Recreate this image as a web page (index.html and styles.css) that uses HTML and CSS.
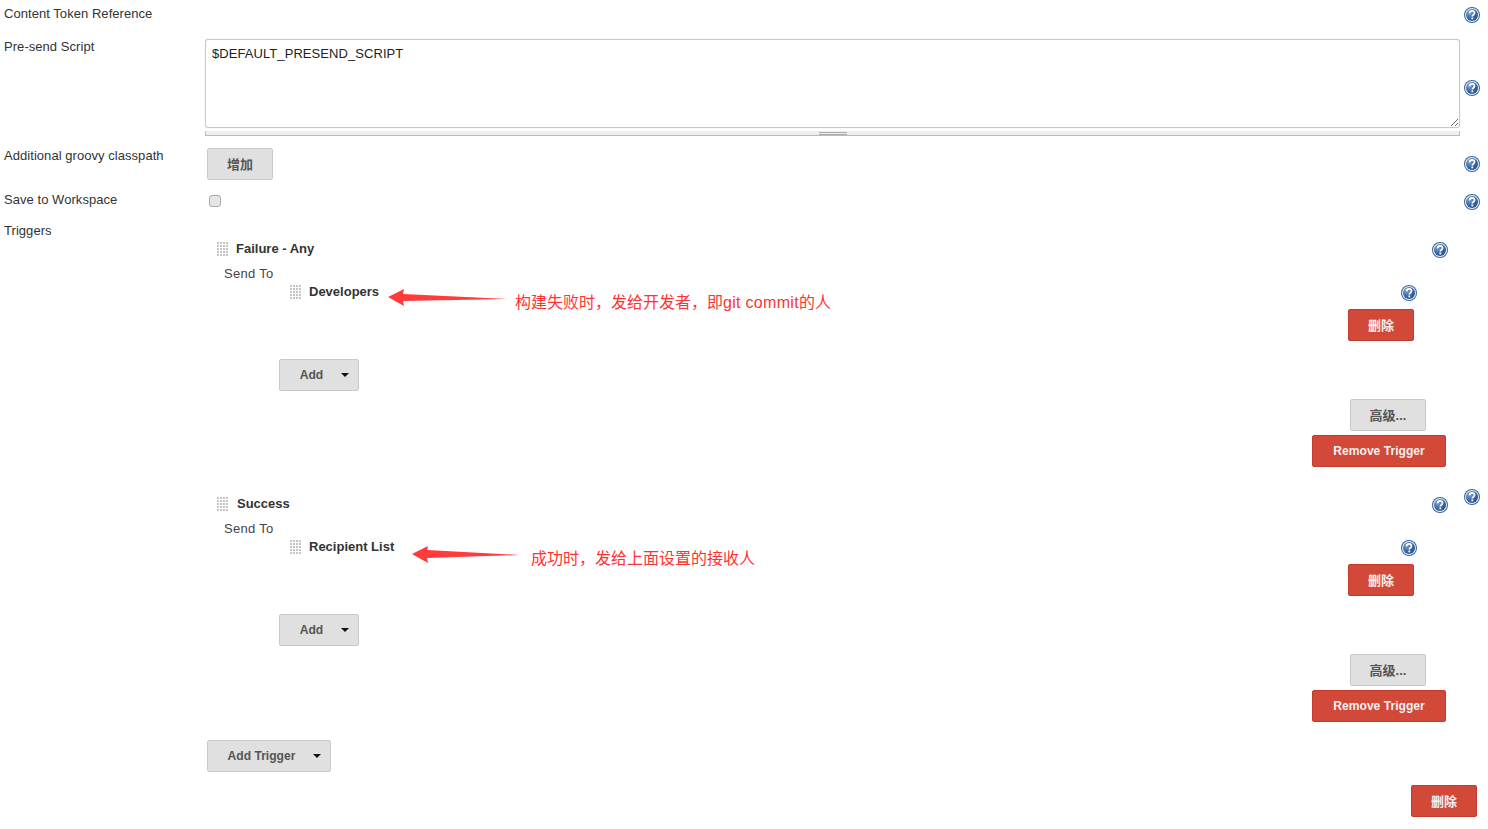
FILE: index.html
```html
<!DOCTYPE html>
<html lang="zh">
<head>
<meta charset="utf-8">
<title>Editable Email Notification</title>
<link rel="stylesheet" href="styles.css">
</head>
<body>
<svg class="defs" width="0" height="0" aria-hidden="true">
  <defs>
    <radialGradient id="helpFill" cx="30%" cy="30%" r="85%">
      <stop offset="0" stop-color="#86a6cd"/>
      <stop offset="0.5" stop-color="#3f6ca8"/>
      <stop offset="1" stop-color="#1f4c8a"/>
    </radialGradient>
    <symbol id="help" viewBox="0 0 16 16">
      <circle cx="8" cy="8" r="8" fill="#36659f"/>
      <circle cx="8" cy="8" r="7" fill="#eef3f8"/>
      <circle cx="8" cy="8" r="6" fill="url(#helpFill)"/>
      <path d="M5.6 6.2C5.7 4.7 6.7 3.9 8.1 3.9c1.5 0 2.4.9 2.4 2.1 0 1-.6 1.5-1.3 2-.6.4-.8.7-.8 1.5" fill="none" stroke="#fff" stroke-width="1.7"/>
      <rect x="7.4" y="10.5" width="1.8" height="1.8" fill="#fff"/>
    </symbol>
  </defs>
</svg>
<div class="page">
  <div class="row row-token">
    <div class="label">Content Token Reference</div>
    <div></div>
    <svg class="help help-top"><use href="#help"/></svg>
  </div>

  <div class="row row-script">
    <div class="label">Pre-send Script</div>
    <div class="field">
      <textarea class="script" spellcheck="false">$DEFAULT_PRESEND_SCRIPT</textarea>
      <div class="grippie"><span class="grip-lines"></span></div>
    </div>
    <svg class="help"><use href="#help"/></svg>
  </div>

  <div class="row row-classpath">
    <div class="label">Additional groovy classpath</div>
    <div class="field"><button class="btn btn-cjk btn-add-path">增加</button></div>
    <svg class="help"><use href="#help"/></svg>
  </div>

  <div class="row row-save">
    <div class="label">Save to Workspace</div>
    <div class="field"><input class="check" type="checkbox"></div>
    <svg class="help"><use href="#help"/></svg>
  </div>

  <div class="row row-triggers">
    <div class="label">Triggers</div>
    <div class="field triggers">
      <section class="trigger">
        <div class="head">
          <span class="handle"></span>
          <span class="title">Failure - Any</span>
          <svg class="help"><use href="#help"/></svg>
        </div>
        <div class="send-to">Send To</div>
        <div class="sub">
          <div class="sub-head">
            <span class="handle"></span>
            <span class="title">Developers</span>
            <svg class="help"><use href="#help"/></svg>
          </div>
          <button class="btn btn-cjk btn-red btn-del">删除</button>
        </div>
        <button class="btn btn-menu btn-add">Add</button>
        <button class="btn btn-cjk btn-adv">高级...</button>
        <button class="btn btn-red btn-remove">Remove Trigger</button>
      </section>

      <section class="trigger">
        <div class="head">
          <span class="handle"></span>
          <span class="title title-success">Success</span>
          <svg class="help"><use href="#help"/></svg>
        </div>
        <div class="send-to">Send To</div>
        <div class="sub">
          <div class="sub-head">
            <span class="handle"></span>
            <span class="title">Recipient List</span>
            <svg class="help"><use href="#help"/></svg>
          </div>
          <button class="btn btn-cjk btn-red btn-del">删除</button>
        </div>
        <button class="btn btn-menu btn-add">Add</button>
        <button class="btn btn-cjk btn-adv">高级...</button>
        <button class="btn btn-red btn-remove">Remove Trigger</button>
      </section>

      <button class="btn btn-menu btn-add-trigger">Add Trigger</button>
    </div>
    <svg class="help"><use href="#help"/></svg>
  </div>

  <div class="footer"><button class="btn btn-cjk btn-red">删除</button></div>

  <svg class="arrow arrow-one" viewBox="0 0 120 18"><polygon points="0,8 16,0 15,5 120,10 15,12 16,17"/></svg>
  <div class="note note-one">构建失败时，发给开发者，即<span class="latin">git commit</span>的人</div>
  <svg class="arrow arrow-two" viewBox="0 0 108 18"><polygon points="0,8 16,0 15,4 108,9 15,12 16,17"/></svg>
  <div class="note note-two">成功时，发给上面设置的接收人</div>
</div>
</body>
</html>
```
FILE: styles.css
```css
* { box-sizing: border-box; }
html, body { margin: 0; padding: 0; background: #fff; }
body {
  font-family: "Liberation Sans", "Noto Sans CJK SC", sans-serif;
  font-size: 13px;
  line-height: 17px;
  color: #333;
  overflow: hidden;
}
.defs { position: absolute; }
.page { position: relative; width: 1488px; height: 829px; padding: 0 8px 0 4px; }

.row { display: grid; grid-template-columns: 201px 1255px 20px; }
.row > .help { justify-self: end; align-self: center; }
.label { letter-spacing: 0.05px; }

.help { display: block; width: 16px; height: 16px; flex: none; }
.row > .help-top { align-self: start; margin-top: 7px; }

.row-token { height: 38px; }
.row-token .label { margin-top: 5px; }
.row-script { height: 100px; }
.row-classpath { height: 34px; margin-top: 9px; }
.row-save { height: 22px; margin-top: 10px; }
.row-triggers { margin-top: 9px; padding-bottom: 2px; }

.script {
  display: block;
  width: 1255px;
  height: 89px;
  margin: 1px 0 0;
  padding: 5px 6px;
  border: 1px solid #c8c8c8;
  border-radius: 3px;
  box-shadow: 0 0 1px #ccc;
  font: 13px/17px "Liberation Sans", sans-serif;
  letter-spacing: 0.07px;
  color: #222;
  outline: none;
}
.grippie {
  display: flex;
  justify-content: center;
  align-items: center;
  height: 5px;
  margin-top: 3px;
  background: #eee;
  border: solid #bbb;
  border-width: 0 1px 1px;
}
.grip-lines {
  display: block;
  width: 28px;
  height: 3px;
  border-top: 1px solid #aaa;
  border-bottom: 1px solid #aaa;
}

.btn {
  display: block;
  height: 32px;
  padding: 0;
  border: 1px solid #c9c9c9;
  border-radius: 2px;
  background: #e0e0e0;
  color: #555;
  font: bold 12.1px/17px "Liberation Sans", "Noto Sans CJK SC", sans-serif;
  text-align: center;
}
.btn-cjk { font-size: 13px; }
.btn-red {
  width: 66px;
  background: #d24939;
  border-color: #c13b2c;
  color: #f3f0f0;
}
.btn-add-path { width: 66px; margin: 1px 0 0 2px; }
.check {
  display: block;
  appearance: none;
  width: 12px;
  height: 12px;
  margin: 4px 0 0 4px;
  background: #e6e6e6;
  border: 1px solid #aaa;
  border-radius: 3px;
}

.triggers { padding-top: 18px; }
.trigger { width: 1243px; padding-left: 12px; margin-bottom: 28px; }
.head { display: flex; height: 25px; }
.handle {
  display: block;
  flex: none;
  width: 12px;
  height: 15px;
  margin-top: 2px;
  background: radial-gradient(circle at 1px 1px, #c4c4c4 0, #c4c4c4 1px, transparent 1.2px) 0 0 / 3px 3px;
}
.title { margin-left: 7px; font-weight: bold; color: #333; }
.title-success { margin-left: 8px; }
.head .help { margin: 2px 0 0 auto; }
.send-to { margin-left: 7px; height: 18px; letter-spacing: 0.3px; color: #444; }

.sub { margin-left: 73px; margin-right: 31px; }
.sub-head { display: flex; height: 26px; }
.sub-head .help { margin: 2px 0 0 auto; }
.btn-del { margin-left: auto; margin-right: 3px; }

.btn-menu { position: relative; padding-right: 15px; }
.btn-menu::after {
  content: "";
  position: absolute;
  top: 13px;
  right: 9px;
  border: 4px solid transparent;
  border-top-color: #111;
  border-bottom-width: 0;
}
.btn-add { width: 80px; margin: 18px 0 0 62px; }
.btn-adv { width: 76px; margin: 8px 22px 0 auto; }
.btn-remove { width: 134px; margin: 4px 2px 0 auto; }
.btn-add-trigger { width: 124px; margin: -10px 0 0 2px; }

.footer { display: flex; justify-content: flex-end; margin-top: 11px; padding-right: 3px; }

.arrow { position: absolute; fill: #ff3b3b; }
.arrow-one { left: 388px; top: 289px; width: 120px; height: 18px; }
.arrow-two { left: 412px; top: 546px; width: 108px; height: 18px; }
.note { position: absolute; font: 16px/20px "Liberation Sans", "Noto Sans CJK SC", sans-serif; color: #ff3333; white-space: nowrap; }
.latin { letter-spacing: 0.3px; }
.note-one { left: 515px; top: 293px; }
.note-two { left: 531px; top: 549px; }
```
